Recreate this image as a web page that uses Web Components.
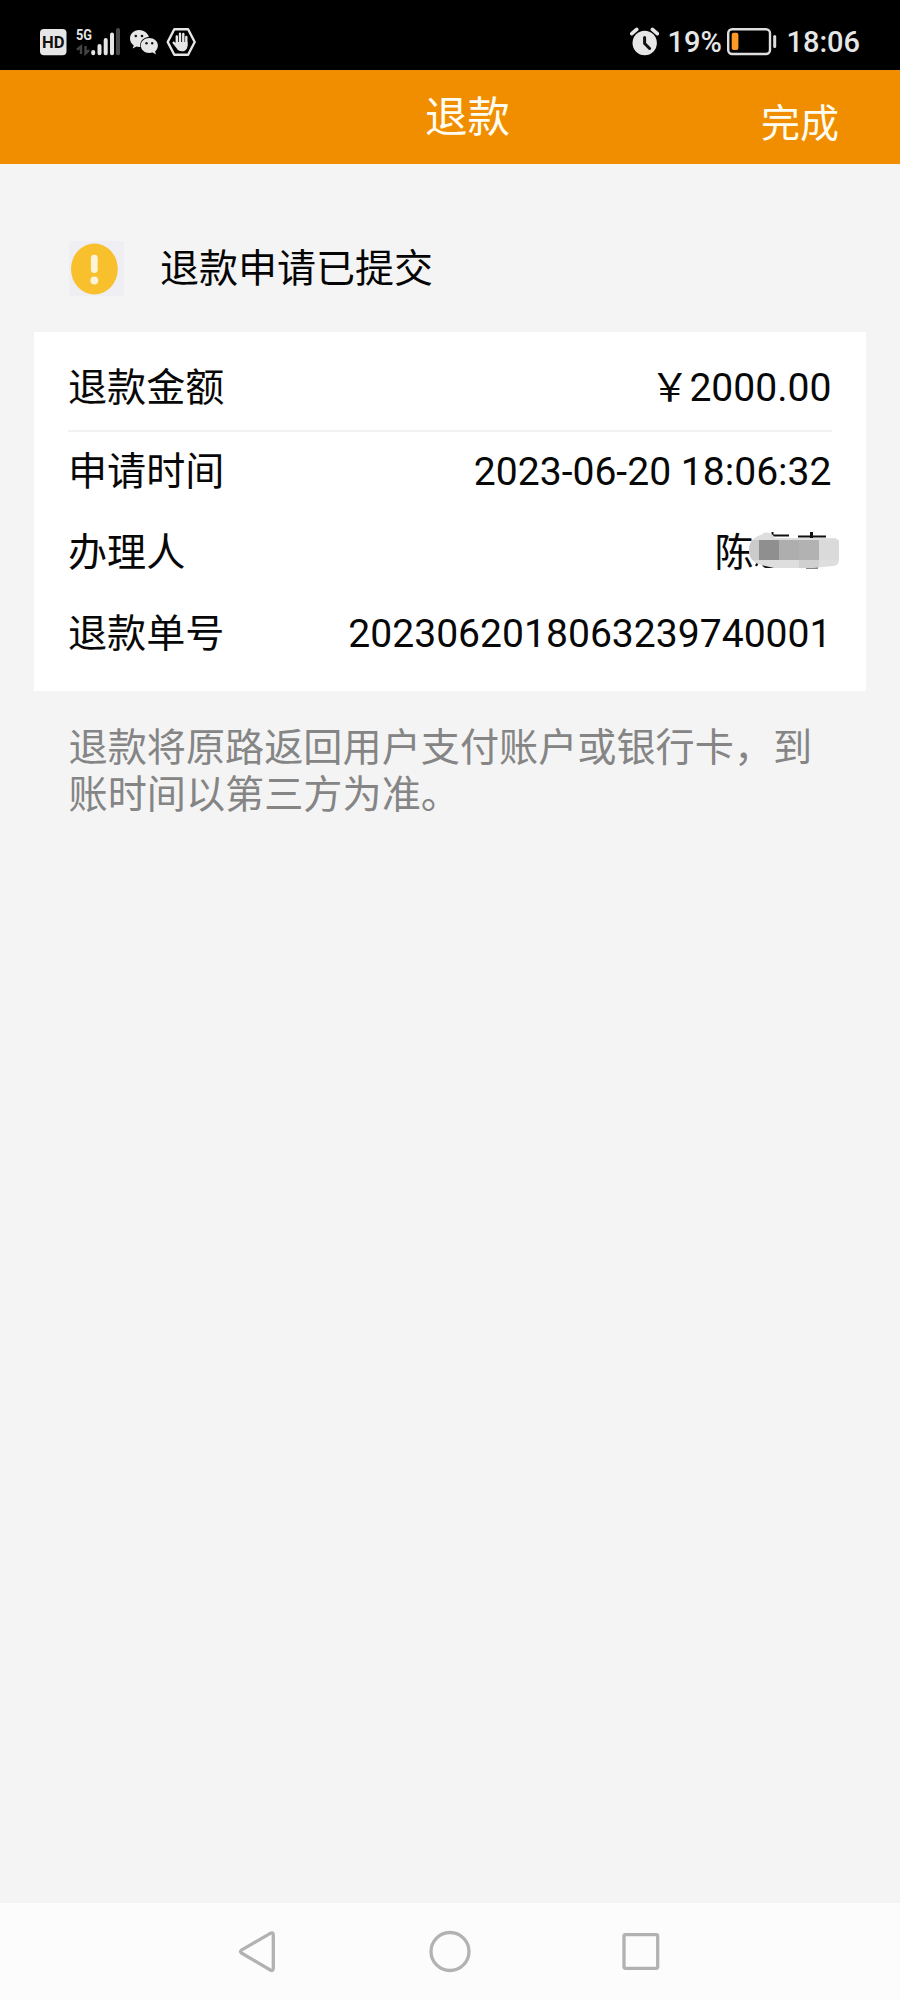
<!DOCTYPE html>
<html lang="zh-CN">
<head>
<meta charset="utf-8">
<title>退款</title>
<style>
html,body{margin:0;padding:0;background:#f4f4f4}
</style>
</head>
<body>
<refund-app></refund-app>
<script>
const define = (name, html) => customElements.define(name, class extends HTMLElement {
  constructor() {
    super();
    const t = document.createElement('template');
    t.innerHTML = html;
    this.attachShadow({ mode: 'open' }).append(t.content.cloneNode(true));
  }
});

define('status-bar', `<style>
:host{display:flex;justify-content:space-between;height:70px;box-sizing:border-box;padding:0 40px 0 40px;background:#000;color:#e6e6e6;font:500 29px/70px Roboto,"Liberation Sans",sans-serif}
div{display:flex;align-items:flex-start}
svg{display:block}
.left svg,.right svg{height:70px;flex:none}
.pct{width:59px;margin-left:8px;padding-top:7px;line-height:70px}
.time{margin-left:8px;padding-top:7px}
span{white-space:nowrap;height:63px}
</style>
<div class="left">
<svg width="160" height="70" viewBox="40 0 160 70">
 <rect x="40" y="29" width="26.5" height="26.3" rx="4" fill="#e6e6e6"/>
 <text x="42" y="48" font-size="17" font-weight="700" fill="#111" textLength="22.5" lengthAdjust="spacingAndGlyphs">HD</text>
 <text x="76" y="39.7" font-size="15.5" font-weight="700" fill="#e6e6e6" textLength="16" lengthAdjust="spacingAndGlyphs">5G</text>
 <path d="M81 54V46.5L77 49.8M85.5 46v7.500l3.500-3.300" fill="none" stroke="#444" stroke-width="2.400"/>
 <g stroke-width="4" stroke-linecap="round" stroke="#e6e6e6"><path d="M93.200 52V53.300M99.500 46V53.300M105.700 40V53.300M112 34.500V53.300"/><path d="M118 30V53.300" stroke="#484848"/></g>
 <path d="M139 30c-5.100 0-9 3.700-9 8.400 0 2.900 1.400 5.300 3.700 6.900l-.9 3.300 3.600-2c1.100.3 2.300.4 3.900.3-.9-5.600 3.500-9.900 8.600-9.900-1-4-5.200-7-9.900-7z" fill="#e6e6e6"/>
 <path d="M149.300 38c-4.800 0-8.500 3.300-8.500 7.500s3.700 7.500 8.500 7.500c1.200 0 2.300-.2 3.400-.5l3.200 1.900-.8-3c1.800-1.500 2.800-3.500 2.800-5.900 0-4.200-3.800-7.500-8.600-7.500z" fill="#e6e6e6"/>
 <g fill="#111"><circle cx="135.800" cy="36" r="1.300"/><circle cx="142" cy="36" r="1.300"/><circle cx="146.500" cy="43.300" r="1.200"/><circle cx="152.200" cy="43.300" r="1.200"/></g>
 <path d="M174.300 29.300h13.800L194.700 42l-6.600 12.700h-13.800L167.700 42z" fill="none" stroke="#e6e6e6" stroke-width="2.400" stroke-linejoin="round"/>
 <path d="M176.800 46V36.500M180 43V33.700M183.300 43V34M186.300 45V37" stroke="#e6e6e6" stroke-width="2.400" stroke-linecap="round"/>
 <path d="M175.600 42h11.900v3.500c0 3.800-2.300 5.800-5.400 5.800-3 0-4.300-1.200-5.600-3.300L172.600 43.200c-.7-1.300.9-2.300 1.900-1.300l1.500 1.400z" fill="#e6e6e6"/>
</svg></div>
<div class="right">
<svg width="29" height="70" viewBox="630 0 29 70"><circle cx="644.700" cy="43" r="12.200" fill="#e6e6e6"/><path d="M631.800 33.700l4.900-4.300M657.300 33.700l-4.900-4.300" stroke="#e6e6e6" stroke-width="3.600" stroke-linecap="round"/><path d="M644.600 37.500v6l5 5" fill="none" stroke="#111" stroke-width="3" stroke-linecap="round" stroke-linejoin="round"/></svg>
<span class="pct">19%</span>
<svg width="52" height="70" viewBox="726 0 52 70"><rect x="728.200" y="29.200" width="41.800" height="24.800" rx="4" fill="none" stroke="#dedede" stroke-width="2.400"/><rect x="731.700" y="32.700" width="6.700" height="17.300" rx="2" fill="#ff9a26"/><path d="M774.700 36.500v10" stroke="#dedede" stroke-width="3" stroke-linecap="round"/></svg>
<span class="time">18:06</span>
</div>`);

define('title-bar', `<style>
:host{display:grid;grid-template-columns:1fr auto 1fr;height:94px;background:#f18e00;color:#fffdf2;font-family:"Noto Sans CJK SC",sans-serif;white-space:nowrap}
h1{margin:0 0 0 35px;font-size:42.500px;font-weight:400;line-height:88px}
.done{justify-self:end;padding-right:61px;font-size:39px;line-height:100px}
</style><span></span><h1><slot></slot></h1><span class="done"><slot name="action"></slot></span>`);

define('result-heading', `<style>
:host{display:flex;height:168px;box-sizing:border-box;padding:77px 0 0 69px;gap:35px;font:39px/52px "Noto Sans CJK SC",sans-serif;color:#050505}
svg{flex:none;display:block}
.t{line-height:48px}
</style><svg width="56" height="56" viewBox="0 0 56 56"><rect width="55" height="55" fill="#efeff3"/><ellipse cx="25.400" cy="28" rx="23.400" ry="25.500" fill="#f8c02c"/><path d="M25.300 17.200V28.500" stroke="#fdf3d8" stroke-width="6.800" stroke-linecap="round"/><circle cx="25.300" cy="39.500" r="3.900" fill="#fdf3d8"/></svg><span class="t"><slot></slot></span>`);

define('detail-card', `<style>
:host{display:block;height:359px;box-sizing:border-box;margin:0 34.500px 0 34px;padding:0 34px;background:#fff}
</style><slot></slot>`);

define('detail-row', `<style>
:host{display:flex;justify-content:space-between;height:81px;line-height:76px;font-size:39.100px;color:#080808;white-space:nowrap}
:host([lead]){height:99.500px;line-height:104px;box-sizing:border-box;border-bottom:2px solid #f2f2f2;margin-bottom:-2px}
.label{font-family:"Noto Sans CJK SC",sans-serif}
.value{font-family:Roboto,"Noto Sans CJK SC",sans-serif;padding-top:4px}
</style><span class="label"><slot name="label"></slot></span><span class="value"><slot></slot></span>`);

define('masked-name', `<style>
:host{display:flex;width:117px;height:77px;margin-top:-4px;font:39px/76px "Noto Sans CJK SC",sans-serif}
svg{display:block;flex:none;margin:1px -10px 0 -5px;position:relative}
</style><slot></slot><svg width="94" height="77" viewBox="750 512 94 77">
<g stroke="#111" stroke-width="2" fill="none"><path d="M764 535.500H790M773.500 532V538M799 536.500H827"/><path d="M812.500 532V540" stroke-width="3"/><path d="M759 562L757 566M764 563q0 4 5 4h13M807 567.500h12" stroke-width="2.200"/></g>
<clipPath id="m"><path d="M764 533q8-2 12 5h58q6 0 6 5v17q0 5-5 6l-22 2H775l-13-3q-12-3-12-15t14-16z"/></clipPath>
<g clip-path="url(#m)"><path d="M750 530h90v38h-90z" fill="#dedede"/><path d="M750 540h10v20h-10z" fill="#cbcbcb"/><path d="M760 540h20v20h-20z" fill="#8f8f8f"/><path d="M780 540h20v20h-20z" fill="#aeaeae"/><path d="M800 540h20v20h-20z" fill="#b2b2b2"/><path d="M820 540h20v20h-20z" fill="#dadada"/><path d="M800 560h20v8h-20z" fill="#d0d0d0"/></g></svg>`);

define('refund-note', `<style>
:host{display:block;margin:30px 60px 0 68.500px;font:39.150px/47px "Noto Sans CJK SC",sans-serif;color:#858585}
</style><slot></slot>`);

define('nav-bar', `<style>
:host{display:flex;justify-content:center;height:97px;background:#fcfcfc;margin-top:auto}
svg{display:block}
</style><svg width="500" height="97" viewBox="200 1903 500 97" fill="none" stroke="#b2b2b2" stroke-width="3.300" stroke-linejoin="round"><path d="M241.400 1950.200Q239.600 1951.600 241.400 1953L270.300 1970Q273.300 1971.500 273.300 1968.300V1935Q273.300 1931.700 270.300 1933.300Z"/><circle cx="450" cy="1951.500" r="19"/><rect x="624" y="1934.700" width="33.700" height="33.600" rx="1.500"/></svg>`);

define('refund-app', `<style>
:host{display:flex;flex-direction:column;width:900px;height:2000px;background:#f4f4f4;overflow:hidden}
status-bar,title-bar,result-heading,detail-card,refund-note,nav-bar{flex:none}
</style>
<status-bar></status-bar>
<title-bar>退款<span slot="action">完成</span></title-bar>
<result-heading>退款申请已提交</result-heading>
<detail-card>
<detail-row lead><span slot="label">退款金额</span>￥2000.00</detail-row>
<detail-row><span slot="label">申请时间</span>2023-06-20 18:06:32</detail-row>
<detail-row><span slot="label">办理人</span><masked-name>陈</masked-name></detail-row>
<detail-row><span slot="label">退款单号</span>2023062018063239740001</detail-row>
</detail-card>
<refund-note>退款将原路返回用户支付账户或银行卡，到<br>账时间以第三方为准。</refund-note>
<nav-bar></nav-bar>`);
</script>
</body>
</html>
